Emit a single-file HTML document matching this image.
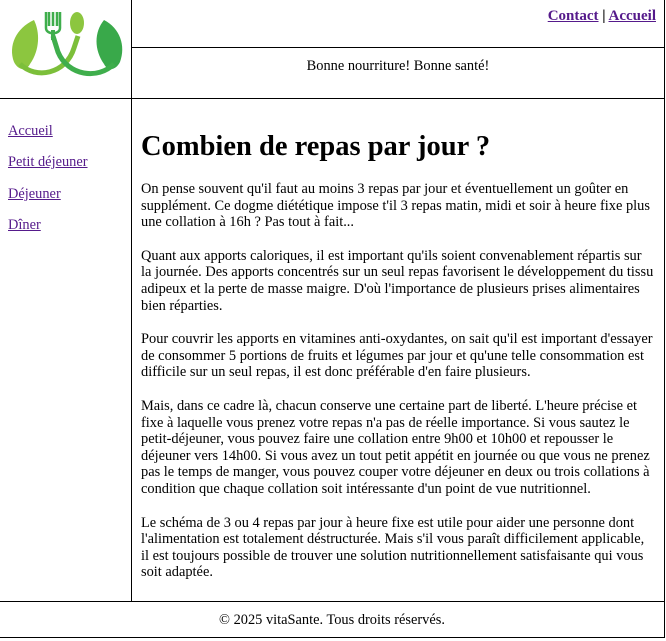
<!DOCTYPE html>
<html><head><meta charset="utf-8"><style>
body{margin:0;width:666px;height:641px;background:#fff;font-family:"Liberation Serif",serif;font-size:14px;color:#000;position:relative;overflow:hidden}
.l{position:absolute;background:#000}
a{color:#551a8b}
#nav a{position:absolute;left:8px;font-size:14.4px}
#main{position:absolute;left:141px;top:117px;width:520px;line-height:16.6px;font-size:14.4px;white-space:nowrap}
h1{font-size:28.5px;margin:14px 0 18px;line-height:32px}
p{margin:0 0 17px}
</style></head><body>
<div class="l" style="left:0;top:98px;width:665px;height:1px"></div>
<div class="l" style="left:131px;top:0;width:1px;height:602px"></div>
<div class="l" style="left:664px;top:0;width:1px;height:638px"></div>
<div class="l" style="left:131px;top:47px;width:534px;height:1px"></div>
<div class="l" style="left:0;top:601px;width:665px;height:1px"></div>
<div class="l" style="left:0;top:637px;width:665px;height:1px"></div>
<svg style="position:absolute;left:0;top:0" width="131" height="98" viewBox="0 0 131 98">
<path d="M34 20 C16 28 8 46 14 62 C18 70 26 72 30 64 C40 50 40 32 34 20Z" fill="#8cc63f"/>
<path d="M104 20 C120 28 126 46 120 62 C116 70 108 72 104 64 C94 50 94 32 104 20Z" fill="#39a94a"/>
<path d="M20 64 C36 80 66 74 74 48 L78 36" stroke="#7cbf3a" stroke-width="5" fill="none"/>
<path d="M114 64 C98 80 68 76 58 52 L53 36" stroke="#3fae4c" stroke-width="5" fill="none"/>
<ellipse cx="77" cy="23" rx="7" ry="11" fill="#8cc63f"/>
<path d="M49 12v14M53 12v14M57 12v14M46 12v16c0 7 14 7 14 0V12" stroke="#3fae4c" stroke-width="2.5" fill="none"/>
<path d="M53 30v10" stroke="#3fae4c" stroke-width="4"/>
</svg>
<div style="position:absolute;right:10px;top:8px;font-weight:bold;font-size:15px"><a href="#">Contact</a> | <a href="#">Accueil</a></div>
<div style="position:absolute;left:132px;width:532px;top:58px;text-align:center;font-size:14.4px">Bonne nourriture! Bonne santé!</div>
<div id="nav"><a href="#" style="top:123px">Accueil</a><a href="#" style="top:154px">Petit déjeuner</a><a href="#" style="top:186px">Déjeuner</a><a href="#" style="top:217px">Dîner</a></div>
<div id="main">
<h1>Combien de repas par jour ?</h1>
<p>On pense souvent qu'il faut au moins 3 repas par jour et éventuellement un goûter en<br>supplément. Ce dogme diététique impose t'il 3 repas matin, midi et soir à heure fixe plus<br>une collation à 16h ? Pas tout à fait...</p>
<p>Quant aux apports caloriques, il est important qu'ils soient convenablement répartis sur<br>la journée. Des apports concentrés sur un seul repas favorisent le développement du tissu<br>adipeux et la perte de masse maigre. D'où l'importance de plusieurs prises alimentaires<br>bien réparties.</p>
<p>Pour couvrir les apports en vitamines anti-oxydantes, on sait qu'il est important d'essayer<br>de consommer 5 portions de fruits et légumes par jour et qu'une telle consommation est<br>difficile sur un seul repas, il est donc préférable d'en faire plusieurs.</p>
<p>Mais, dans ce cadre là, chacun conserve une certaine part de liberté. L'heure précise et<br>fixe à laquelle vous prenez votre repas n'a pas de réelle importance. Si vous sautez le<br>petit-déjeuner, vous pouvez faire une collation entre 9h00 et 10h00 et repousser le<br>déjeuner vers 14h00. Si vous avez un tout petit appétit en journée ou que vous ne prenez<br>pas le temps de manger, vous pouvez couper votre déjeuner en deux ou trois collations à<br>condition que chaque collation soit intéressante d'un point de vue nutritionnel.</p>
<p>Le schéma de 3 ou 4 repas par jour à heure fixe est utile pour aider une personne dont<br>l'alimentation est totalement déstructurée. Mais s'il vous paraît difficilement applicable,<br>il est toujours possible de trouver une solution nutritionnellement satisfaisante qui vous<br>soit adaptée.</p>
</div>
<div style="position:absolute;left:0;width:664px;top:612px;text-align:center;font-size:14.4px">© 2025 vitaSante. Tous droits réservés.</div>
</body></html>
